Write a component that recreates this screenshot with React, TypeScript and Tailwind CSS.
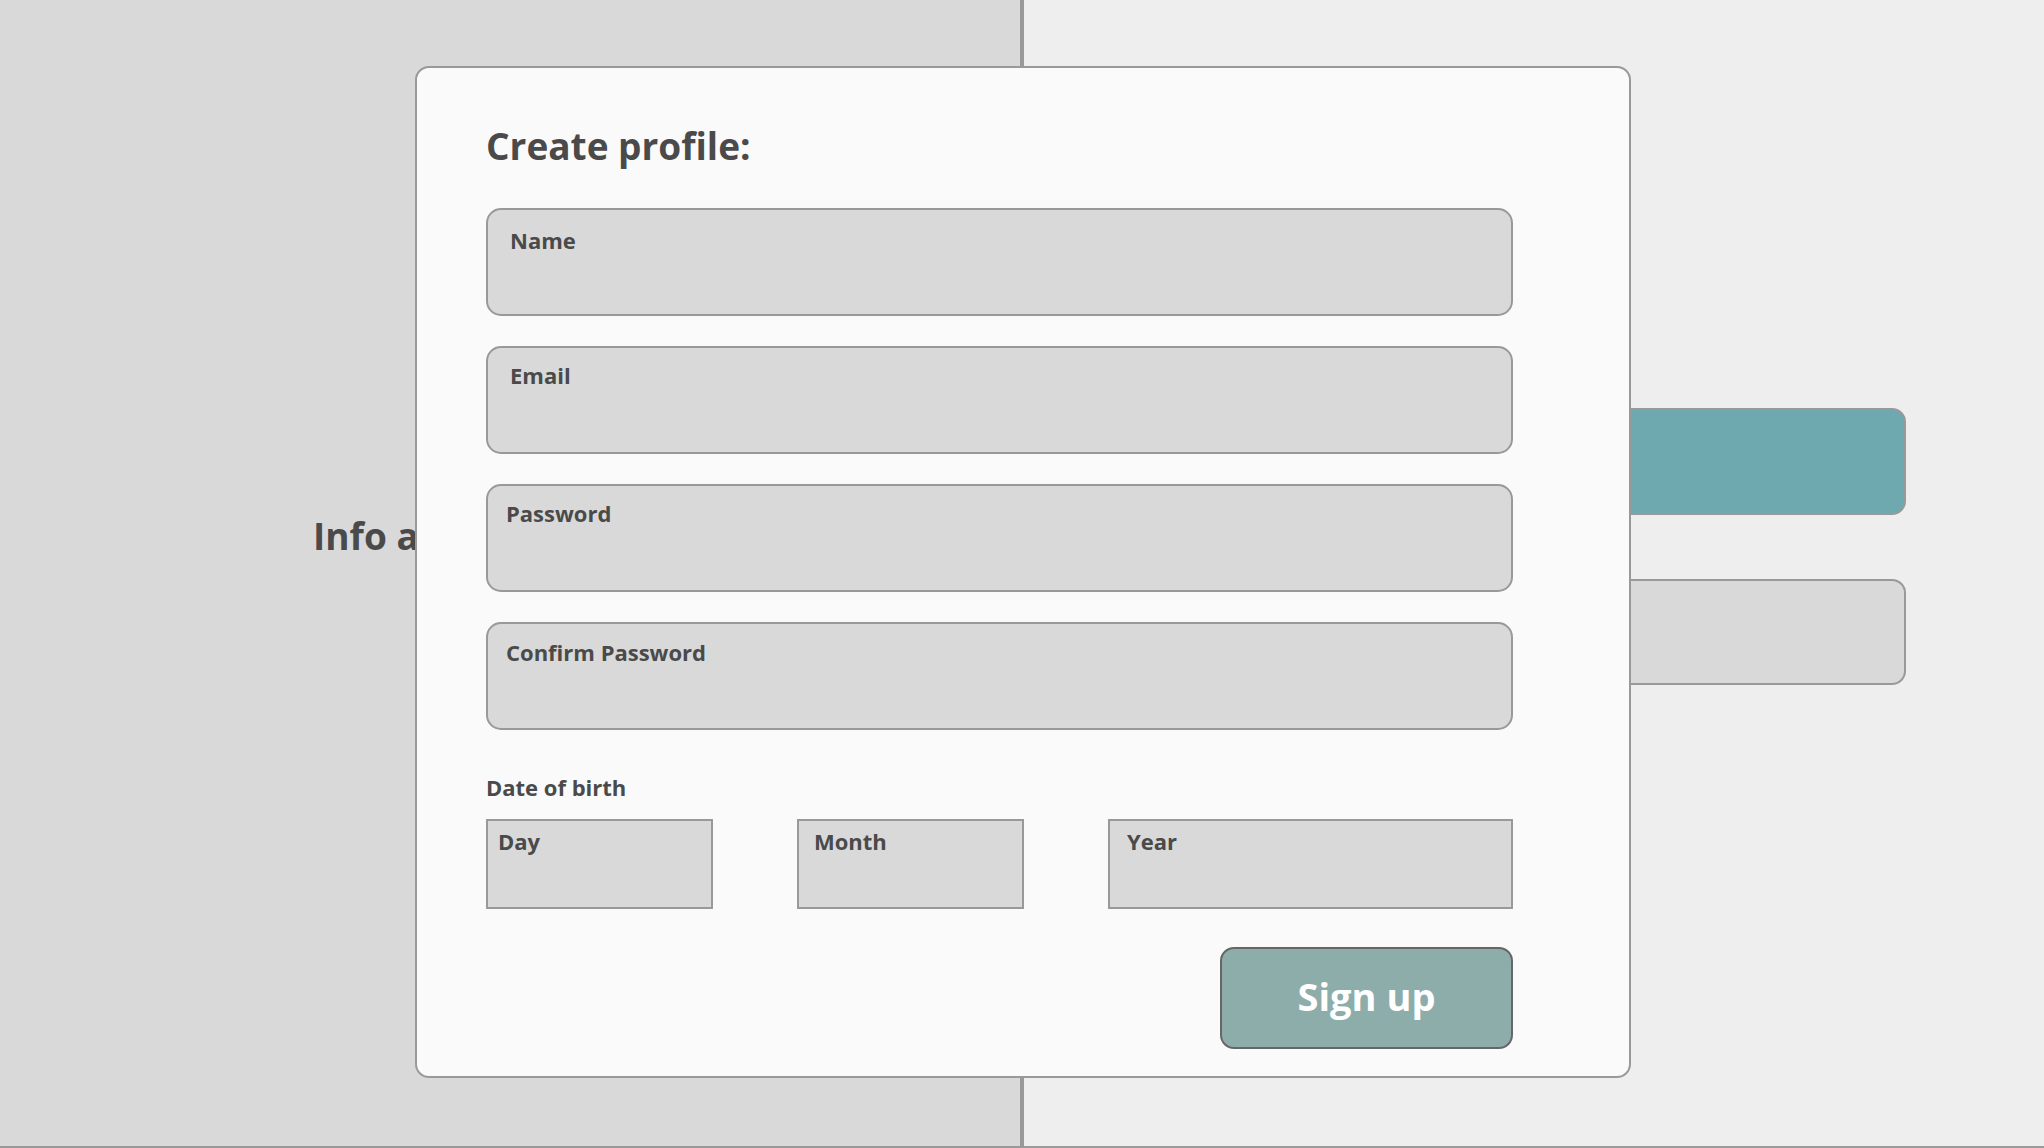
import React from 'react';

const fieldBase =
  'h-[108px] box-border rounded-[15px] border-2 border-[#999999] bg-[#d9d9d9] text-[22px] leading-[28px] font-bold text-[#4a4a4a]';

const dateBase =
  'h-[90px] box-border border-2 border-[#999999] bg-[#d9d9d9] pt-[6px] text-[22px] leading-[28px] font-bold text-[#4a4a4a]';

export default function App() {
  return (
    <div className="relative w-[2044px] h-[1148px] overflow-hidden font-['Open_Sans',sans-serif]">
      <div className="flex h-full border-b-2 border-[#999999]">
        {/* Left panel */}
        <div className="w-[1020px] bg-[#d9d9d9] pl-[313px] pt-[514px]">
          <p className="text-[37px] leading-[44px] font-bold text-[#4a4a4a] whitespace-nowrap">Info about the app</p>
        </div>
        <div className="w-[4px] bg-[#999999]" />
        {/* Right panel */}
        <div className="flex-1 bg-[#eeeeee] flex flex-col items-center pt-[408px] gap-[64px]">
          <div className="w-[744px] h-[107px] rounded-[14px] border-2 border-[#999999] bg-[#6fa9b0]" />
          <div className="w-[744px] h-[106px] rounded-[14px] border-2 border-[#999999] bg-[#d9d9d9]" />
        </div>
      </div>

      {/* Create profile dialog */}
      <div className="absolute left-[415px] top-[66px] w-[1216px] h-[1012px] box-border rounded-[14px] border-2 border-[#999999] bg-[#fafafa] pl-[69px] pr-[116px] pt-[56px] flex flex-col">
        <h1 className="text-[37px] leading-[44px] font-bold text-[#4a4a4a]">Create profile:</h1>

        <div className="mt-[40px] flex flex-col gap-[30px]">
          <div className={`${fieldBase} pl-[22px] pt-[16px]`}>Name</div>
          <div className={`${fieldBase} pl-[22px] pt-[13px]`}>Email</div>
          <div className={`${fieldBase} pl-[18px] pt-[13px]`}>Password</div>
          <div className={`${fieldBase} pl-[18px] pt-[14px]`}>Confirm Password</div>
        </div>

        <p className="mt-[43px] text-[22px] leading-[28px] font-bold text-[#4a4a4a]">Date of birth</p>
        <div className="mt-[18px] flex gap-[84px]">
          <div className={`${dateBase} w-[227px] pl-[10px]`}>Day</div>
          <div className={`${dateBase} w-[227px] pl-[15px]`}>Month</div>
          <div className={`${dateBase} flex-1 pl-[17px]`}>Year</div>
        </div>

        <button className="mt-[38px] self-end w-[293px] h-[102px] box-border rounded-[14px] border-2 border-[#666666] bg-[#8dadab] pb-[5px] text-[38px] leading-[44px] font-bold text-white">
          Sign up
        </button>
      </div>
    </div>
  );
}
